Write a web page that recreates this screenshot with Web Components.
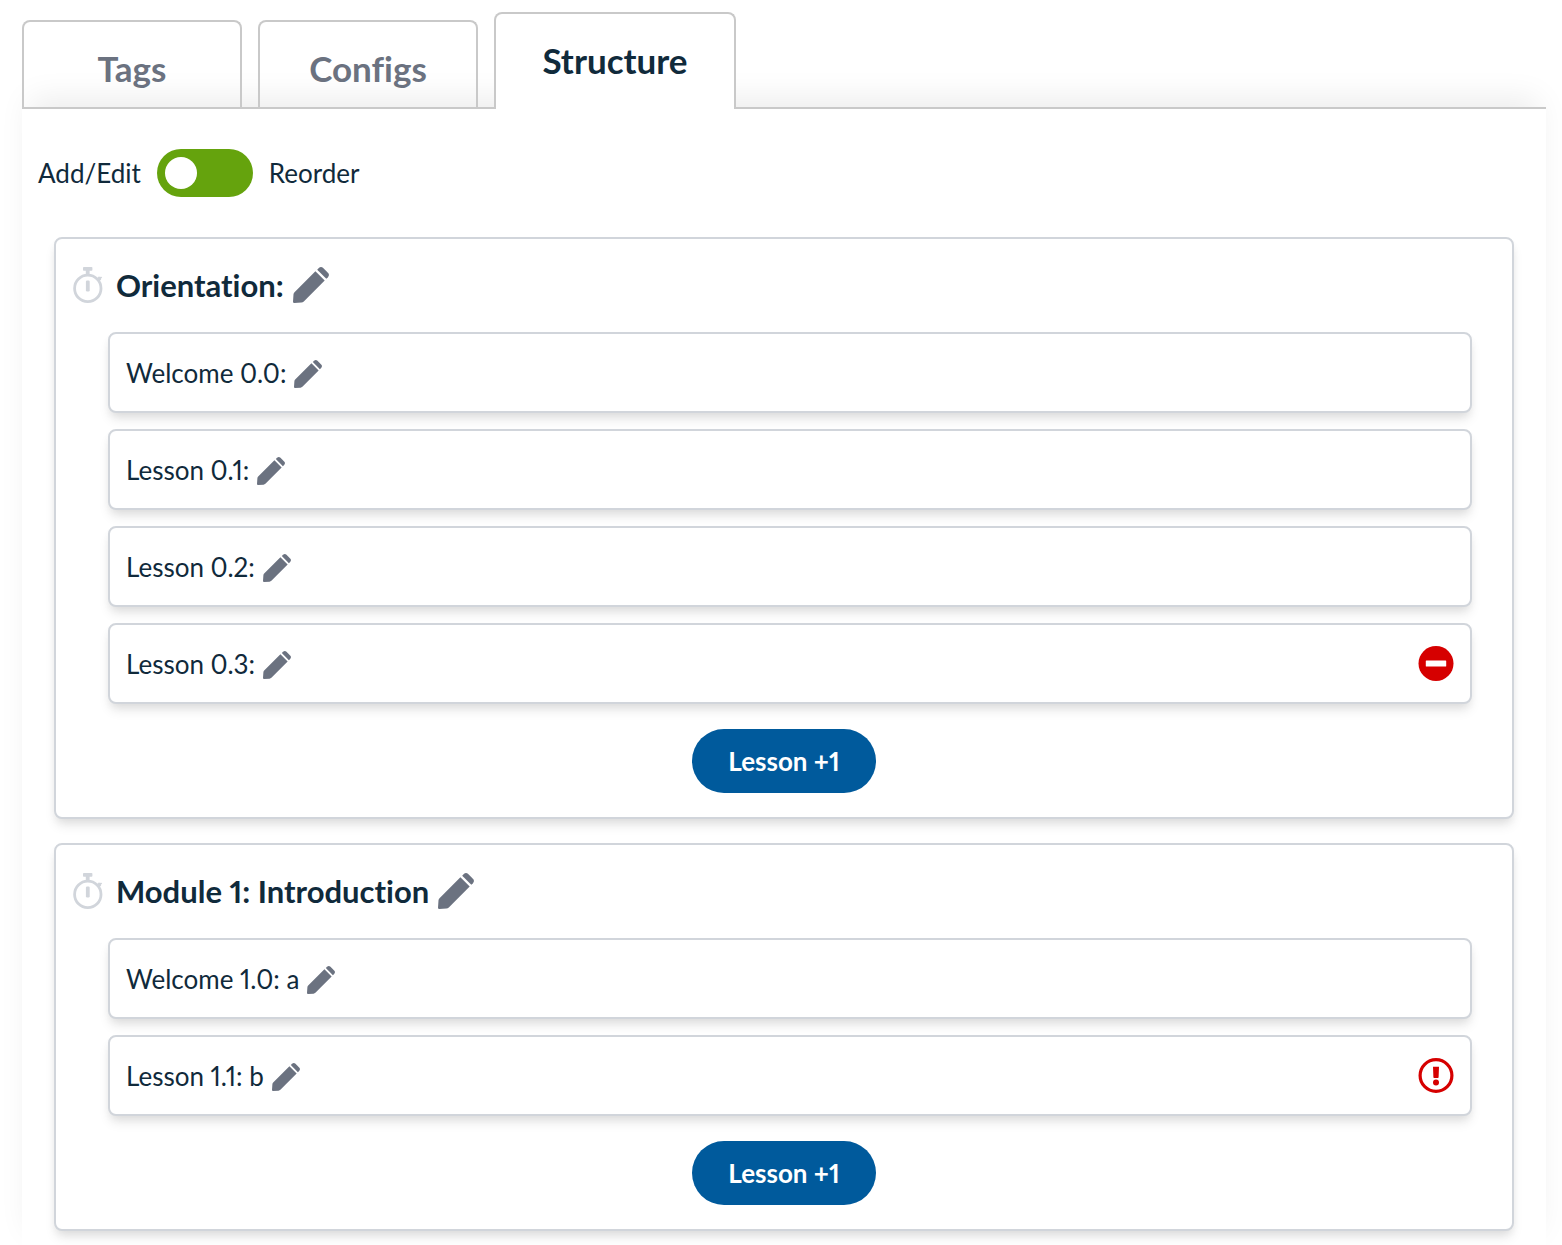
<!DOCTYPE html>
<html lang="en">
<head>
<meta charset="utf-8">
<meta name="viewport" content="width=device-width, initial-scale=1">
<title>Structure</title>
<style>
  body { margin: 0; padding: 12px 16px 0 22px; background: #fff; color: #102a3b; font: 26px/36px Lato, "Open Sans", sans-serif; font-variant-ligatures: none; font-variant-numeric: proportional-nums; overflow-x: hidden; }
</style>
</head>
<body>
<course-editor></course-editor>

<template id="course-editor">
  <style>
    :host { display: block; }
    nav { display: flex; align-items: flex-end; gap: 16px; }
    main { padding: 40px 32px 24px; border-top: 2px solid #c9c9c9; background: #fff; box-shadow: 0 -16px 30px -8px rgba(0, 0, 0, .08); }
    .modules { display: flex; flex-direction: column; gap: 24px; margin-top: 40px; }
    mode-switch { margin-left: -16px; }
  </style>
  <nav>
    <nav-tab>Tags</nav-tab>
    <nav-tab>Configs</nav-tab>
    <nav-tab active>Structure</nav-tab>
  </nav>
  <main>
    <mode-switch></mode-switch>
    <div class="modules">
      <module-card>
        <span slot="title">Orientation:</span>
        <lesson-row>Welcome 0.0:</lesson-row>
        <lesson-row>Lesson 0.1:</lesson-row>
        <lesson-row>Lesson 0.2:</lesson-row>
        <lesson-row>Lesson 0.3:<remove-button slot="action"></remove-button></lesson-row>
      </module-card>
      <module-card>
        <span slot="title">Module 1: Introduction</span>
        <lesson-row>Welcome 1.0: a</lesson-row>
        <lesson-row>Lesson 1.1: b<alert-button slot="action"></alert-button></lesson-row>
      </module-card>
    </div>
  </main>
</template>

<template id="nav-tab">
  <style>
    :host { display: block; }
    a { display: flex; align-items: center; justify-content: center; box-sizing: border-box; width: 220px; height: 87px; padding-top: 6px; border: 2px solid #c9c9c9; border-bottom: 0; border-radius: 8px 8px 0 0; color: #6b7280; font-size: 35px; line-height: 44px; font-weight: 700; text-decoration: none; }
    :host([active]) { position: relative; z-index: 1; margin-bottom: -2px; }
    :host([active]) a { width: 242px; height: 97px; padding: 0 0 4px; background: #fff; color: #102a3b; }
  </style>
  <a href="#"><slot></slot></a>
</template>

<template id="mode-switch">
  <style>
    :host { display: flex; align-items: center; gap: 16px; }
    input { appearance: none; display: flex; align-items: center; box-sizing: border-box; width: 96px; height: 48px; margin: 0; padding: 8px; border-radius: 24px; background: #65a30d; cursor: pointer; }
    input::before { content: ""; width: 32px; height: 32px; border-radius: 50%; background: #fff; }
    input:checked { justify-content: flex-end; }
  </style>
  <label for="mode">Add/Edit</label>
  <input id="mode" type="checkbox" role="switch">
  <label for="mode">Reorder</label>
</template>

<template id="module-card">
  <style>
    :host { display: block; padding: 24px 40px 24px 16px; border: 2px solid #d1d5db; border-radius: 8px; background: #fff; box-shadow: 0 8px 12px -2px rgba(0, 0, 0, .1), 0 4px 8px -2px rgba(0, 0, 0, .06); }
    header { display: flex; align-items: center; height: 44px; }
    h2 { margin: 0 9px 0 12px; font-size: 31px; line-height: 44px; font-weight: 700; }
    .lessons { display: flex; flex-direction: column; gap: 16px; margin: 25px 0 25px 36px; }
    footer { display: flex; justify-content: center; margin-right: -24px; }
    footer button { height: 64px; min-width: 184px; padding: 0 32px; border: 0; border-radius: 32px; background: #005a9c; color: #fff; font: inherit; font-variant: inherit; font-weight: 700; cursor: pointer; }
    svg { display: block; }
  </style>
  <header>
    <svg width="32" height="36" viewBox="-1 0 32 36" aria-hidden="true" fill="#d1d5db">
      <circle cx="14.8" cy="21.4" r="13.2" fill="none" stroke="#d1d5db" stroke-width="2.8"/>
      <rect x="10" y="0" width="9.4" height="3.7" rx=".8"/>
      <rect x="12.8" y="2" width="3.8" height="7"/>
      <rect x="12.9" y="13.5" width="3.8" height="11" rx="1.2"/>
      <path d="M23.8 11.7 26 9.3 27 10.2 28 9.4 29.2 10.6 27.9 11.8 28.2 12.5 26 14.5z"/>
    </svg>
    <h2><slot name="title"></slot></h2>
    <edit-button large></edit-button>
  </header>
  <div class="lessons"><slot></slot></div>
  <footer><button type="button">Lesson +1</button></footer>
</template>

<template id="lesson-row">
  <style>
    :host { display: flex; align-items: center; box-sizing: border-box; height: 81px; padding: 0 16px; border: 2px solid #d1d5db; border-radius: 8px; background: #fff; box-shadow: 0 8px 12px -2px rgba(0, 0, 0, .1), 0 4px 8px -2px rgba(0, 0, 0, .06); }
    edit-button { margin: 3px 0 0 8px; }
    .action { display: flex; margin-left: auto; }
  </style>
  <span><slot></slot></span>
  <edit-button></edit-button>
  <span class="action"><slot name="action"></slot></span>
</template>

<template id="edit-button">
  <style>
    :host { display: block; --size: 28px; }
    :host([large]) { --size: 36px; }
    button { display: block; padding: 0; border: 0; background: none; cursor: pointer; }
    svg { display: block; width: var(--size); height: var(--size); }
  </style>
  <button type="button" aria-label="Edit">
    <svg viewBox="0 0 36 36" fill="#6b7280" aria-hidden="true">
      <path d="M1.5 25.2 22.4 4.3 31.7 13.6 10.8 34.5Q9.8 35.5 8.4 35.6L1.3 36Q0 36 0 34.7L.5 27.3Q.6 26 1.5 25.2z"/>
      <path d="M24.2 2.7 25.8 1.1Q28 -.9 30.2 1.1L34.9 5.8Q37 8 34.9 10.2L33.3 11.8z"/>
    </svg>
  </button>
</template>

<template id="remove-button">
  <style>
    :host, svg { display: block; }
    button { display: block; padding: 0; border: 0; background: none; cursor: pointer; }
  </style>
  <button type="button" aria-label="Remove">
    <svg width="36" height="36" viewBox="0 0 36 36" aria-hidden="true">
      <circle cx="18" cy="17.5" r="17.5" fill="#d60000"/>
      <rect x="7.8" y="14.5" width="20.4" height="6" rx=".6" fill="#fff"/>
    </svg>
  </button>
</template>

<template id="alert-button">
  <style>
    :host, svg { display: block; }
    button { display: block; padding: 0; border: 0; background: none; cursor: pointer; }
  </style>
  <button type="button" aria-label="Show problem">
    <svg width="36" height="36" viewBox="0 0 36 36" aria-hidden="true" fill="#d60000">
      <circle cx="18" cy="17.5" r="15.9" fill="none" stroke="#d60000" stroke-width="3.2"/>
      <path d="M15 8.8h6l-.4 10.4q0 .7-.7.7h-3.8q-.7 0-.7-.7z"/>
      <circle cx="18" cy="24.5" r="3"/>
    </svg>
  </button>
</template>

<script>
  const define = (name) => customElements.define(name, class extends HTMLElement {
    constructor() {
      super();
      this.attachShadow({ mode: "open" }).append(document.getElementById(name).content.cloneNode(true));
    }
  });
  ["edit-button", "remove-button", "alert-button", "lesson-row", "module-card", "mode-switch", "nav-tab", "course-editor"].forEach(define);
</script>
</body>
</html>
